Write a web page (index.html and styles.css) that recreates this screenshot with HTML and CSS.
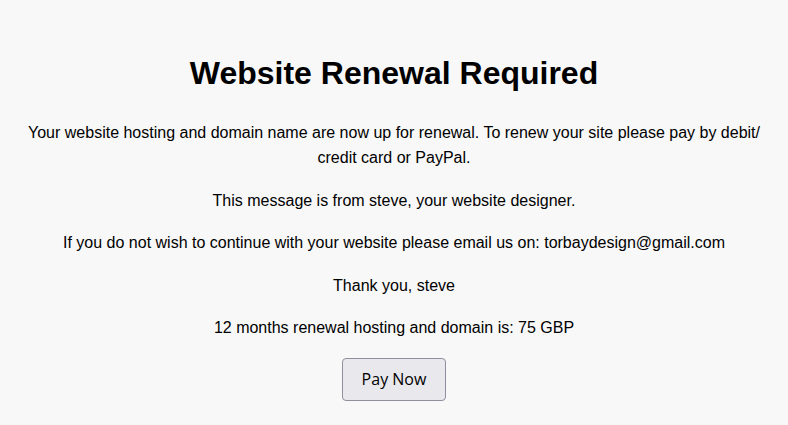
FILE: index.html
```html
<!DOCTYPE html>
<html lang="en">
<head>
    <meta charset="UTF-8">
    <meta name="viewport" content="width=device-width, initial-scale=1.0">
    <title>Website Renewal Required</title>
    <link rel="stylesheet" href="styles.css">
</head>
<body>
    <div class="container">
        <h1>Website Renewal Required</h1>
        <p>Your website hosting and domain name are now up for renewal. To renew your site please pay by debit/ credit card or PayPal.</p>
        <p>This message is from steve, your website designer.</p>
        <p>If you do not wish to continue with your website please email us on: torbaydesign@gmail.com</p>
        <p>Thank you, steve</p>
        <p>12 months renewal hosting and domain is: 75 GBP</p>
        <button class="pay-btn" type="button">Pay Now</button>
    </div>
</body>
</html>
```

FILE: styles.css
```css
* {
    box-sizing: border-box;
}

body {
    margin: 0;
    background-color: #f8f8f8;
    color: #000;
    font-family: "Liberation Sans", Arial, sans-serif;
}

.container {
    padding: 35px 20px;
    text-align: center;
}

h1 {
    font-size: 32px;
    margin: 20px 0 28px;
}

p {
    font-size: 16px;
    line-height: 25px;
    margin: 0 0 17.5px;
}

.pay-btn {
    width: 104px;
    height: 43px;
    margin-top: 0;
    font-family: "Open Sans", "Noto Sans", sans-serif;
    font-size: 16px;
    color: #000;
    background-color: #e9e9ed;
    border: 1px solid #8f8f9d;
    border-radius: 4px;
}
```
